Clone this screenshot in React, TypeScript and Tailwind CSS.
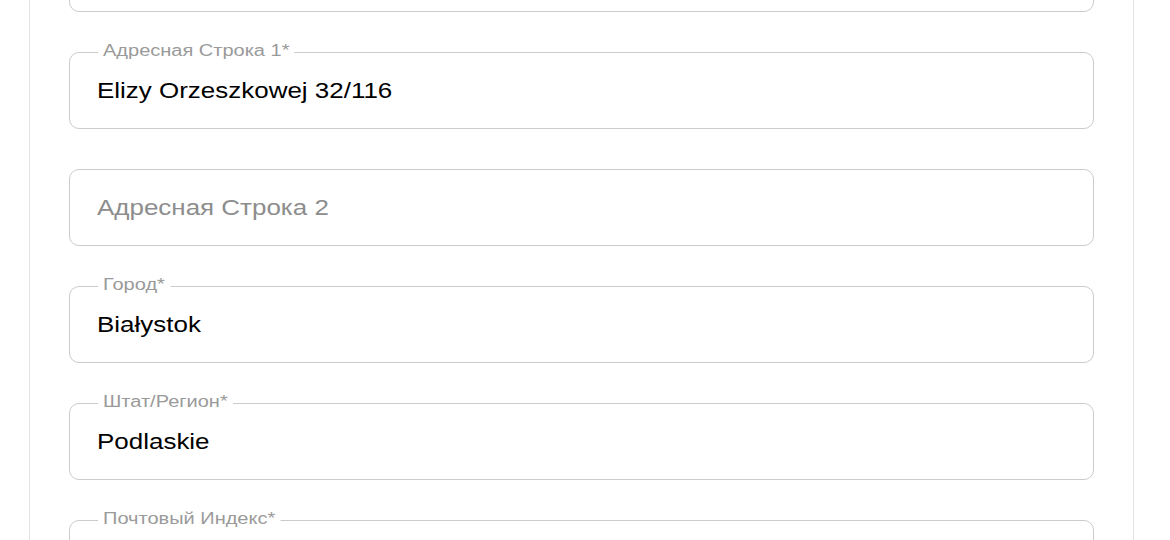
import React from "react";

type Field = { label?: string; value?: string; placeholder?: string };

const fields: Field[] = [
  {},
  { label: "Адресная Строка 1*", value: "Elizy Orzeszkowej 32/116" },
  { placeholder: "Адресная Строка 2" },
  { label: "Город*", value: "Białystok" },
  { label: "Штат/Регион*", value: "Podlaskie" },
  { label: "Почтовый Индекс*" },
];

function OutlinedField({ f }: { f: Field }) {
  return (
    <div className="relative h-[77px] w-[1025px] shrink-0 rounded-[10px] border border-[#cbcbcb] bg-white">
      {f.label && (
        <span className="absolute left-[28px] top-[-11px] inline-block origin-left scale-x-[1.25] bg-white px-[4px] text-[16px] leading-[18px] text-[#9a9a9a]">
          {f.label}
        </span>
      )}
      <div className="flex h-full items-center pl-[27px]">
        {f.value ? (
          <span className="inline-block origin-left scale-x-[1.18] text-[22px] leading-[26px] text-black">{f.value}</span>
        ) : f.placeholder ? (
          <span className="inline-block origin-left scale-x-[1.18] text-[22px] leading-[26px] text-[#8d8d8d]">{f.placeholder}</span>
        ) : null}
      </div>
    </div>
  );
}

export default function App() {
  return (
    <div
      className="h-[540px] w-[1170px] overflow-hidden bg-white"
      style={{ fontFamily: '"Liberation Sans", Arial, "Noto Sans", sans-serif' }}
    >
      <div className="ml-[29px] mt-[-200px] flex w-[1105px] flex-col gap-[40px] border-x border-[#e3e3e3] px-[39px] pb-[200px]">
        <div className="h-[95px]" />
        {fields.map((f, i) => (
          <OutlinedField key={i} f={f} />
        ))}
      </div>
    </div>
  );
}
